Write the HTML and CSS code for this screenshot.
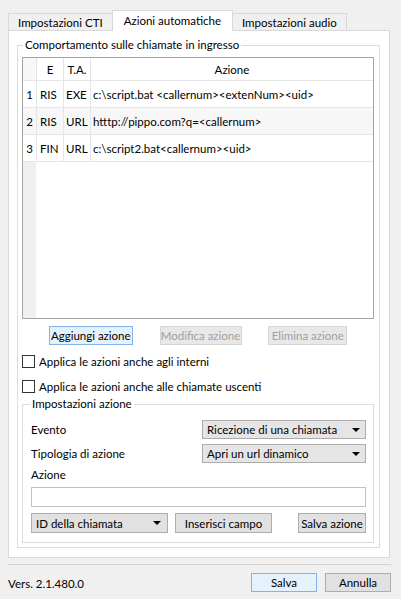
FILE: index.html
```html
<!DOCTYPE html>
<html lang="it">
<head>
<meta charset="utf-8">
<title>Azioni automatiche</title>
<link rel="stylesheet" href="styles.css">
</head>
<body>
<div class="tabs">
  <div class="tab">Impostazioni CTI</div>
  <div class="tab active">Azioni automatiche</div>
  <div class="tab">Impostazioni audio</div>
</div>
<div class="panel">
  <fieldset class="group main">
    <legend>Comportamento sulle chiamate in ingresso</legend>
    <div class="grid">
      <div class="row head">
        <div class="c n"></div><div class="c e center">E</div><div class="c t center">T.A.</div><div class="c a center">Azione</div>
      </div>
      <div class="row">
        <div class="c n">1</div><div class="c e">RIS</div><div class="c t">EXE</div><div class="c a">c:\script.bat &lt;callernum&gt;&lt;extenNum&gt;&lt;uid&gt;</div>
      </div>
      <div class="row alt">
        <div class="c n">2</div><div class="c e">RIS</div><div class="c t">URL</div><div class="c a">htttp://pippo.com?q=&lt;callernum&gt;</div>
      </div>
      <div class="row">
        <div class="c n">3</div><div class="c e">FIN</div><div class="c t">URL</div><div class="c a">c:\script2.bat&lt;callernum&gt;&lt;uid&gt;</div>
      </div>
      <div class="filler"><div class="fn"></div></div>
    </div>
    <div class="btnrow">
      <button class="btn focus w-add">Aggiungi azione</button>
      <button class="btn disabled w-mod">Modifica azione</button>
      <button class="btn disabled w-del">Elimina azione</button>
    </div>
    <label class="check first"><span class="box"></span>Applica le azioni anche agli interni</label>
    <label class="check second"><span class="box"></span>Applica le azioni anche alle chiamate uscenti</label>
    <fieldset class="group sub">
      <legend>Impostazioni azione</legend>
      <div class="field">
        <span>Evento</span>
        <div class="select wide"><span>Ricezione di una chiamata</span><svg class="arrow" width="8" height="4" viewBox="0 0 8 4"><path d="M0 0H8L4 4Z" fill="#000"/></svg></div>
      </div>
      <div class="field second">
        <span>Tipologia di azione</span>
        <div class="select wide"><span>Apri un url dinamico</span><svg class="arrow" width="8" height="4" viewBox="0 0 8 4"><path d="M0 0H8L4 4Z" fill="#000"/></svg></div>
      </div>
      <div class="label">Azione</div>
      <div class="input"></div>
      <div class="actions">
        <div class="select idsel"><span>ID della chiamata</span><svg class="arrow" width="8" height="4" viewBox="0 0 8 4"><path d="M0 0H8L4 4Z" fill="#000"/></svg></div>
        <button class="btn w-ins">Inserisci campo</button>
        <button class="btn w-save push">Salva azione</button>
      </div>
    </fieldset>
  </fieldset>
</div>
<div class="sep"></div>
<div class="footer">
  <span class="vers">Vers. 2.1.480.0</span>
  <div class="fbtns">
    <button class="btn focus w-foot">Salva</button>
    <button class="btn w-foot">Annulla</button>
  </div>
</div>
</body>
</html>
```
FILE: styles.css
```css
* { box-sizing: border-box; }
html, body { margin: 0; padding: 0; }
body {
  width: 401px;
  height: 599px;
  overflow: hidden;
  background: #f0f0f0;
  font-family: Lato, "Noto Sans", sans-serif;
  font-size: 11.5px;
  color: #000;
}

/* Tabs */
.tabs {
  display: flex;
  align-items: flex-end;
  height: 31px;
  padding: 10px 0 0 8px;
  margin-bottom: -1px;
  position: relative;
  z-index: 1;
}
.tab {
  height: 17px;
  margin-bottom: 1px;
  padding: 0 9px;
  border: 1px solid #d9d9d9;
  border-bottom: none;
  background: #f0f0f0;
  display: flex;
  align-items: center;
  margin-right: -1px;
  white-space: nowrap;
}
.tab.active {
  height: 21px;
  margin-bottom: 0;
  background: #fff;
  padding: 0 11px 2px;
}

/* Panel */
.panel {
  margin: 0 11px 0 8px;
  background: #fff;
  border: 1px solid #d9d9d9;
  padding: 6px 9px 9px 8px;
}
.group {
  margin: 0;
  min-width: 0;
  border: 1px solid #dcdcdc;
}
.group legend {
  line-height: 16px;
  padding: 0 2px;
  margin-left: 1px;
}
.main { padding: 4px 5px 4px 4px; }

/* Grid */
.grid {
  height: 262px;
  border: 1px solid #a5a5a5;
  display: flex;
  flex-direction: column;
  background: #fff;
}
.row {
  display: flex;
  height: 27px;
  border-bottom: 1px solid #e5e5e5;
}
.row.head { height: 23px; }
.row.alt { background: #f7f7f7; }
.c {
  display: flex;
  align-items: center;
  border-right: 1px solid #e5e5e5;
  white-space: nowrap;
  overflow: hidden;
}
.c.n { width: 14px; justify-content: center; }
.head .c.n { background: #f7f7f7; }
.c.e { width: 27px; padding-left: 3px; }
.c.t { width: 27px; padding-left: 2px; }
.c.a { flex: 1; padding-left: 2px; border-right: none; }
.c.center { justify-content: center; padding-left: 0; }
.filler { flex: 1; display: flex; }
.fn { width: 13px; background: #f0f0f0; }

/* Buttons */
.btn {
  height: 19px;
  border: 1px solid #adadad;
  background: #e1e1e1;
  font: inherit;
  color: #000;
  padding: 0;
  display: flex;
  align-items: center;
  justify-content: center;
  white-space: nowrap;
}
.btn.focus { border-color: #7eb4ea; background: #e5f1fb; }
.btn.disabled { border-color: #d5d5d5; background: #e8e8e8; color: #a0a0a0; }
.w-add { width: 84px; }
.w-mod { width: 82px; }
.w-del { width: 79px; }
.w-ins { width: 97px; }
.w-save { width: 68px; }
.w-foot { width: 66px; }

.btnrow {
  display: flex;
  justify-content: space-evenly;
  margin-top: 7px;
}

/* Checkboxes */
.check {
  display: flex;
  align-items: center;
  gap: 4px;
  height: 16px;
}
.check.first { margin-top: 8px; }
.check.second { margin-top: 9px; }
.box {
  width: 13px;
  height: 13px;
  border: 1px solid #333;
  background: #fff;
}

/* Sub group */
.sub {
  margin-top: 2px;
  padding: 8px 7px 9px 8px;
}
.sub legend { margin-left: -1px; }
.field {
  display: flex;
  justify-content: space-between;
  align-items: center;
  height: 19px;
}
.field.second { margin-top: 5px; }
.select {
  height: 19px;
  border: 1px solid #acacac;
  background: #e5e5e5;
  display: flex;
  align-items: center;
  justify-content: space-between;
  padding: 0 5px 0 4px;
}
.select.wide { width: 164px; }
.label { margin-top: 4px; line-height: 16px; }
.input {
  margin-top: 4px;
  height: 20px;
  border: 1px solid #c3c3c3;
  background: #fff;
}
.actions {
  display: flex;
  gap: 7px;
  margin-top: 6px;
}
.idsel { width: 137px; height: 20px; background: #e1e1e1; border-color: #adadad; padding: 0 6px 0 4px; }
.actions .btn { height: 20px; }
.push { margin-left: auto; }

/* Footer */
.sep {
  margin: 6px 10px 0 8px;
  border-top: 1px solid #d5d5d5;
}
.footer {
  display: flex;
  align-items: center;
  justify-content: space-between;
  margin-top: 8px;
  padding: 0 10px 0 8px;
  height: 19px;
}
.vers { padding-top: 2px; }
.fbtns { display: flex; gap: 8px; }
```
